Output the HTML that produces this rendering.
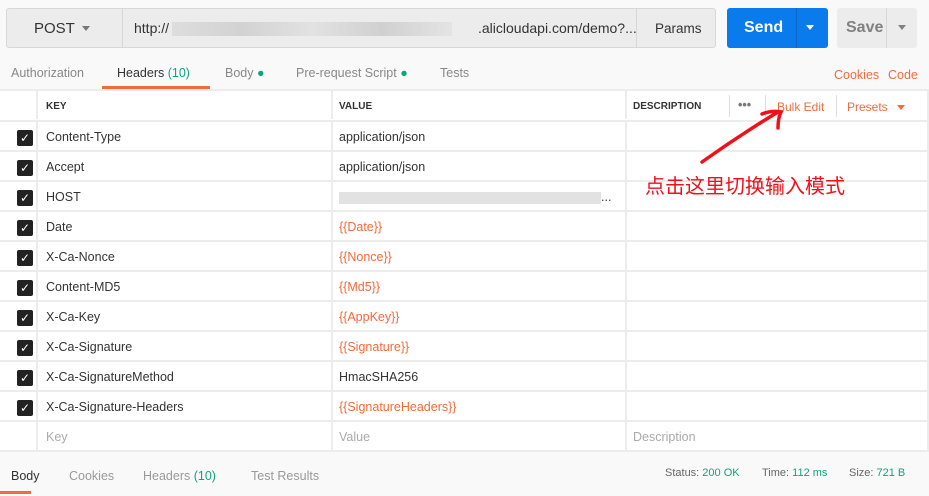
<!DOCTYPE html><html><head><style>
*{margin:0;padding:0;box-sizing:border-box}
body{width:929px;height:496px;background:#f9f9f9;font-family:"Liberation Sans",sans-serif;position:relative;overflow:hidden;color:#333}
.a{position:absolute}
.t{font-size:12.5px;white-space:nowrap}
.row{position:absolute;left:0;width:927px;height:30px;background:#fff;border-bottom:2px solid #ececec}
.c{position:absolute;top:0;height:28px;line-height:31px;font-size:12.5px;padding-left:8px;border-left:2px solid #ececec}
.v{padding-left:6px}
.cb{position:absolute;left:17px;top:8px;width:16px;height:16px;background:#222;border-radius:2px;color:#fff;font-size:12px;line-height:16px;text-align:center}
.o{color:#f26b3a}
.g{color:#11a37f}
</style></head><body>
<div class="a" style="left:6px;top:8px;width:710px;height:40px;background:#ececec;border:1px solid #d8d8d8;border-radius:3px"></div>
<div class="a" style="left:122px;top:8px;width:1px;height:40px;background:#d8d8d8"></div>
<div class="a" style="left:636px;top:8px;width:1px;height:40px;background:#d8d8d8"></div>
<div class="a t" style="left:34px;top:20px;font-size:15px;color:#333">POST</div>
<div class="a" style="left:82px;top:26px;border:4px solid transparent;border-top:5px solid #777"></div>
<div class="a t" style="left:134px;top:20px;font-size:14px">http://</div>
<div class="a" style="left:172px;top:22px;width:280px;height:14px;background:linear-gradient(90deg,#ddd,#d2d2d2,#e2e2e2,#d0d0d0,#e4e4e4)"></div>
<div class="a t" style="left:478px;top:20px;font-size:14px">.alicloudapi.com/demo?...</div>
<div class="a t" style="left:655px;top:21px;font-size:13.5px">Params</div>
<div class="a" style="left:727px;top:8px;width:101px;height:40px;background:#097bed;border-radius:3px"></div>
<div class="a" style="left:796px;top:8px;width:1px;height:40px;background:#0a68c6"></div>
<div class="a t" style="left:744px;top:19px;font-size:16px;font-weight:bold;color:#fff">Send</div>
<div class="a" style="left:806px;top:25px;border:4px solid transparent;border-top:5px solid #fff"></div>
<div class="a" style="left:837px;top:8px;width:80px;height:40px;background:#ececec;border-radius:3px"></div>
<div class="a" style="left:886px;top:8px;width:1px;height:40px;background:#d8d8d8"></div>
<div class="a t" style="left:846px;top:19px;font-size:16px;font-weight:bold;color:#808080">Save</div>
<div class="a" style="left:898px;top:25px;border:4px solid transparent;border-top:5px solid #808080"></div>
<div class="a t" style="left:11px;top:66px;color:#888">Authorization</div>
<div class="a t" style="left:117px;top:66px">Headers <span class="g">(10)</span></div>
<div class="a" style="left:102px;top:86px;width:108px;height:3px;background:#f26b3a"></div>
<div class="a t" style="left:225px;top:66px;color:#888">Body <span class="g">●</span></div>
<div class="a t" style="left:296px;top:66px;color:#888">Pre-request Script <span class="g">●</span></div>
<div class="a t" style="left:440px;top:66px;color:#888">Tests</div>
<div class="a t o" style="left:834px;top:68px">Cookies</div>
<div class="a t o" style="left:888px;top:68px">Code</div>
<div class="a" style="left:0;top:89px;width:929px;height:2px;background:#ececec"></div>
<div class="row" style="top:91px;height:31px"><div class="c" style="left:36px;width:295px;font-size:10px;font-weight:bold;line-height:32px">KEY</div><div class="c v" style="left:331px;width:294px;font-size:10px;font-weight:bold;line-height:32px">VALUE</div><div class="c v" style="left:625px;width:302px;font-size:10px;font-weight:bold;line-height:32px">DESCRIPTION</div>
<div class="a" style="left:729px;top:4px;height:22px;border-left:1px solid #ddd"></div><div class="a t" style="left:738px;top:7px;color:#777;font-weight:bold">•••</div><div class="a" style="left:765px;top:4px;height:22px;border-left:1px solid #ddd"></div><div class="a t o" style="left:777px;top:9px;font-size:12px">Bulk Edit</div><div class="a" style="left:836px;top:4px;height:22px;border-left:1px solid #ddd"></div><div class="a t o" style="left:847px;top:9px;font-size:12px">Presets</div><div class="a" style="left:897px;top:14px;border:4px solid transparent;border-top:5px solid #f26b3a"></div></div>
<div class="row" style="top:122px"><div class="cb">✓</div><div class="c" style="left:36px;width:295px">Content-Type</div><div class="c v" style="left:331px;width:294px">application/json</div><div class="c" style="left:625px;width:302px"></div></div>
<div class="row" style="top:152px"><div class="cb">✓</div><div class="c" style="left:36px;width:295px">Accept</div><div class="c v" style="left:331px;width:294px">application/json</div><div class="c" style="left:625px;width:302px"></div></div>
<div class="row" style="top:182px"><div class="cb">✓</div><div class="c" style="left:36px;width:295px">HOST</div><div class="c v" style="left:331px;width:294px"><span style="display:inline-block;width:262px;height:12px;background:#e2e2e2;vertical-align:middle"></span>...</div><div class="c" style="left:625px;width:302px"></div></div>
<div class="row" style="top:212px"><div class="cb">✓</div><div class="c" style="left:36px;width:295px">Date</div><div class="c v o" style="left:331px;width:294px">{{Date}}</div><div class="c" style="left:625px;width:302px"></div></div>
<div class="row" style="top:242px"><div class="cb">✓</div><div class="c" style="left:36px;width:295px">X-Ca-Nonce</div><div class="c v o" style="left:331px;width:294px">{{Nonce}}</div><div class="c" style="left:625px;width:302px"></div></div>
<div class="row" style="top:272px"><div class="cb">✓</div><div class="c" style="left:36px;width:295px">Content-MD5</div><div class="c v o" style="left:331px;width:294px">{{Md5}}</div><div class="c" style="left:625px;width:302px"></div></div>
<div class="row" style="top:302px"><div class="cb">✓</div><div class="c" style="left:36px;width:295px">X-Ca-Key</div><div class="c v o" style="left:331px;width:294px">{{AppKey}}</div><div class="c" style="left:625px;width:302px"></div></div>
<div class="row" style="top:332px"><div class="cb">✓</div><div class="c" style="left:36px;width:295px">X-Ca-Signature</div><div class="c v o" style="left:331px;width:294px">{{Signature}}</div><div class="c" style="left:625px;width:302px"></div></div>
<div class="row" style="top:362px"><div class="cb">✓</div><div class="c" style="left:36px;width:295px">X-Ca-SignatureMethod</div><div class="c v" style="left:331px;width:294px">HmacSHA256</div><div class="c" style="left:625px;width:302px"></div></div>
<div class="row" style="top:392px"><div class="cb">✓</div><div class="c" style="left:36px;width:295px">X-Ca-Signature-Headers</div><div class="c v o" style="left:331px;width:294px">{{SignatureHeaders}}</div><div class="c" style="left:625px;width:302px"></div></div>
<div class="row" style="top:422px"><div class="c" style="left:36px;width:295px;color:#aaa">Key</div><div class="c v" style="left:331px;width:294px;color:#aaa">Value</div><div class="c v" style="left:625px;width:302px;color:#aaa">Description</div></div>
<div class="a" style="left:927px;top:91px;width:2px;height:361px;background:#ececec"></div>
<svg class="a" style="left:690px;top:100px" width="100" height="70"><path d="M12 62 Q50 35 88 12 M72 14 Q82 10 91 12 Q88 18 88 28" stroke="#f0101a" stroke-width="3.5" fill="none" stroke-linecap="round"/></svg>
<div class="a" style="left:645px;top:170px;font-family:'Noto Sans CJK SC',sans-serif;font-size:20px;color:#f0101a;white-space:nowrap">点击这里切换输入模式</div>
<div class="a t" style="left:11px;top:469px">Body</div>
<div class="a" style="left:0;top:491px;width:31px;height:3px;background:#f26b3a"></div>
<div class="a t" style="left:69px;top:469px;color:#999">Cookies</div>
<div class="a t" style="left:143px;top:469px;color:#999">Headers <span class="g">(10)</span></div>
<div class="a t" style="left:251px;top:469px;color:#999">Test Results</div>
<div class="a t" style="left:665px;top:467px;font-size:11px;color:#666">Status: <span class="g">200 OK</span></div>
<div class="a t" style="left:762px;top:467px;font-size:11px;color:#666">Time: <span class="g">112 ms</span></div>
<div class="a t" style="left:849px;top:467px;font-size:11px;color:#666">Size: <span class="g">721 B</span></div>
</body></html>
